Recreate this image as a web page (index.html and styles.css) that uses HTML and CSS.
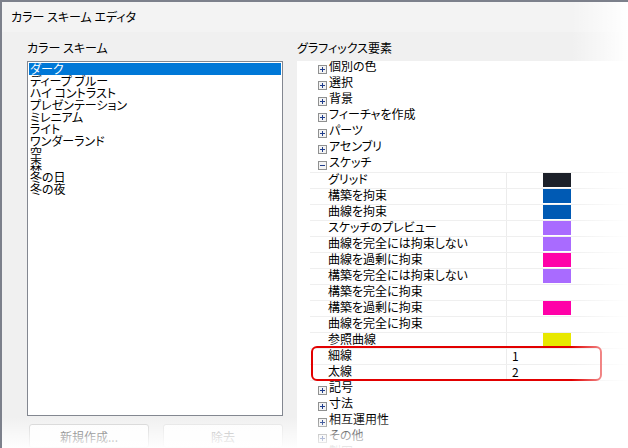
FILE: index.html
```html
<!DOCTYPE html>
<html lang="ja">
<head>
    <meta charset="UTF-8">
    <title>カラー スキーム エディタ</title>
    <link rel="stylesheet" href="styles.css">
</head>
<body>

<div class="ventana">
    <!-- Barra de título -->
    <div class="titulo">カラー スキーム エディタ</div>

    <div class="contenido">
        <!-- Lista de esquemas -->
        <div class="panel panel-izq">
            <div class="etiqueta">カラー スキーム</div>
            <div class="lista">
                <div class="item activo">ダーク</div>
                <div class="item">ディープ ブルー</div>
                <div class="item">ハイ コントラスト</div>
                <div class="item">プレゼンテーション</div>
                <div class="item">ミレニアム</div>
                <div class="item">ライト</div>
                <div class="item">ワンダーランド</div>
                <div class="item">空</div>
                <div class="item">森</div>
                <div class="item">冬の日</div>
                <div class="item">冬の夜</div>
            </div>
            <div class="botones">
                <button class="boton">新規作成...</button>
                <button class="boton boton-off">除去</button>
            </div>
        </div>

        <!-- Árbol de elementos gráficos -->
        <div class="panel panel-der">
            <div class="etiqueta">グラフィックス要素</div>
            <div class="arbol">
                <div class="nodo"><svg class="caja" width="9" height="9"><rect x="0.5" y="0.5" width="8" height="8" fill="#f3f3f3" stroke="#8f9090"/><path d="M2 4.5h5M4.5 2v5" stroke="#1f3d8c"/></svg>個別の色</div>
                <div class="nodo"><svg class="caja" width="9" height="9"><rect x="0.5" y="0.5" width="8" height="8" fill="#f3f3f3" stroke="#8f9090"/><path d="M2 4.5h5M4.5 2v5" stroke="#1f3d8c"/></svg>選択</div>
                <div class="nodo"><svg class="caja" width="9" height="9"><rect x="0.5" y="0.5" width="8" height="8" fill="#f3f3f3" stroke="#8f9090"/><path d="M2 4.5h5M4.5 2v5" stroke="#1f3d8c"/></svg>背景</div>
                <div class="nodo"><svg class="caja" width="9" height="9"><rect x="0.5" y="0.5" width="8" height="8" fill="#f3f3f3" stroke="#8f9090"/><path d="M2 4.5h5M4.5 2v5" stroke="#1f3d8c"/></svg>フィーチャを作成</div>
                <div class="nodo"><svg class="caja" width="9" height="9"><rect x="0.5" y="0.5" width="8" height="8" fill="#f3f3f3" stroke="#8f9090"/><path d="M2 4.5h5M4.5 2v5" stroke="#1f3d8c"/></svg>パーツ</div>
                <div class="nodo"><svg class="caja" width="9" height="9"><rect x="0.5" y="0.5" width="8" height="8" fill="#f3f3f3" stroke="#8f9090"/><path d="M2 4.5h5M4.5 2v5" stroke="#1f3d8c"/></svg>アセンブリ</div>
                <div class="nodo"><svg class="caja" width="9" height="9"><rect x="0.5" y="0.5" width="8" height="8" fill="#f3f3f3" stroke="#8f9090"/><path d="M2 4.5h5" stroke="#1f3d8c"/></svg>スケッチ</div>

                <!-- Propiedades de la sección Sketch -->
                <div class="props">
                    <div class="prop"><div class="nombre">グリッド</div><div class="valor"><span class="color" style="background:#1c2029"></span></div></div>
                    <div class="prop"><div class="nombre">構築を拘束</div><div class="valor"><span class="color" style="background:#005ab4"></span></div></div>
                    <div class="prop"><div class="nombre">曲線を拘束</div><div class="valor"><span class="color" style="background:#005ab4"></span></div></div>
                    <div class="prop"><div class="nombre">スケッチのプレビュー</div><div class="valor"><span class="color" style="background:#a96bff"></span></div></div>
                    <div class="prop"><div class="nombre">曲線を完全には拘束しない</div><div class="valor"><span class="color" style="background:#a96bff"></span></div></div>
                    <div class="prop"><div class="nombre">曲線を過剰に拘束</div><div class="valor"><span class="color" style="background:#ff00a8"></span></div></div>
                    <div class="prop"><div class="nombre">構築を完全には拘束しない</div><div class="valor"><span class="color" style="background:#a96bff"></span></div></div>
                    <div class="prop"><div class="nombre">構築を完全に拘束</div><div class="valor"></div></div>
                    <div class="prop"><div class="nombre">構築を過剰に拘束</div><div class="valor"><span class="color" style="background:#ff00a8"></span></div></div>
                    <div class="prop"><div class="nombre">曲線を完全に拘束</div><div class="valor"></div></div>
                    <div class="prop"><div class="nombre">参照曲線</div><div class="valor"><span class="color" style="background:#e8e800"></span></div></div>
                    <div class="resaltado">
                        <div class="prop"><div class="nombre">細線</div><div class="valor numero">1</div></div>
                        <div class="prop"><div class="nombre">太線</div><div class="valor numero">2</div></div>
                    </div>
                </div>

                <div class="nodo"><svg class="caja" width="9" height="9"><rect x="0.5" y="0.5" width="8" height="8" fill="#f3f3f3" stroke="#8f9090"/><path d="M2 4.5h5M4.5 2v5" stroke="#1f3d8c"/></svg>記号</div>
                <div class="nodo"><svg class="caja" width="9" height="9"><rect x="0.5" y="0.5" width="8" height="8" fill="#f3f3f3" stroke="#8f9090"/><path d="M2 4.5h5M4.5 2v5" stroke="#1f3d8c"/></svg>寸法</div>
                <div class="nodo"><svg class="caja" width="9" height="9"><rect x="0.5" y="0.5" width="8" height="8" fill="#f3f3f3" stroke="#8f9090"/><path d="M2 4.5h5M4.5 2v5" stroke="#1f3d8c"/></svg>相互運用性</div>
                <div class="nodo"><svg class="caja" width="9" height="9"><rect x="0.5" y="0.5" width="8" height="8" fill="#f3f3f3" stroke="#8f9090"/><path d="M2 4.5h5M4.5 2v5" stroke="#1f3d8c"/></svg>その他</div>
                <div class="nodo"><svg class="caja" width="9" height="9"><rect x="0.5" y="0.5" width="8" height="8" fill="#f3f3f3" stroke="#8f9090"/><path d="M2 4.5h5M4.5 2v5" stroke="#1f3d8c"/></svg>製図</div>
            </div>
        </div>
    </div>
</div>

</body>
</html>
```

FILE: styles.css
```css
body {
    margin: 0;
    padding: 0;
    background: #ffffff;
    font-family: "Noto Sans CJK JP", "Noto Sans", sans-serif;
    font-size: 12px;
    font-feature-settings: "palt";
    color: #000000;
    overflow: hidden;
}

/* Ventana principal */
.ventana {
    position: relative;
    width: 628px;
    height: 448px;
    box-sizing: border-box;
    border-top: 2px solid #7c808b;
    border-left: 2px solid #7c808b;
    background: #f0f0f0;
    display: flex;
    flex-direction: column;
    overflow: hidden;
}

/* Degradado blanco a la derecha y abajo */
.ventana::after {
    content: "";
    position: absolute;
    inset: -2px 0 0 -2px;
    pointer-events: none;
    background:
        linear-gradient(to right, rgba(255,255,255,0) 91%, rgba(255,255,255,1) 100%),
        linear-gradient(to bottom, rgba(255,255,255,0) 93%, rgba(255,255,255,0.95) 100%);
}

.titulo {
    height: 30px;
    line-height: 30px;
    padding-left: 9px;
    background: #f3f3f3;
}

.contenido {
    flex: 1;
    display: flex;
    padding: 10px 0 0 25px;
    min-height: 0;
}

.panel {
    display: flex;
    flex-direction: column;
}

.panel-izq {
    width: 256px;
}

.panel-der {
    flex: 1;
    margin-left: 14px;
    min-width: 0;
}

.etiqueta {
    line-height: 12px;
    height: 12px;
    margin-bottom: 7px;
}

/* Lista de esquemas */
.lista {
    height: 358px;
    box-sizing: border-box;
    border: 1px solid #838790;
    background: #ffffff;
    padding: 1px;
}

.item {
    line-height: 12px;
    height: 12px;
    padding-left: 1px;
    white-space: nowrap;
}

.item.activo {
    background: #0078d7;
    color: #ffffff;
}

/* Botones */
.botones {
    display: flex;
    gap: 14px;
    margin: 8px 0 0 2px;
}

.boton {
    width: 120px;
    height: 24px;
    border: 1px solid #d0d0d0;
    border-radius: 3px;
    background: #fdfdfd;
    font-family: inherit;
    font-size: 12px;
    color: #333333;
    padding: 0;
}

.boton-off {
    color: #a8a8a8;
    border-color: #e2e2e2;
}

/* Árbol */
.arbol {
    flex: 1;
    background: #ffffff;
    overflow: hidden;
}

.arbol > .nodo:first-child {
    margin-top: -1px;
}

.nodo {
    display: flex;
    align-items: flex-start;
    height: 16px;
    line-height: 12px;
    padding-left: 21px;
    white-space: nowrap;
}

.caja {
    shape-rendering: crispEdges;
    margin: 5px 2px 0 0;
    flex: none;
}

/* Cuadrícula de propiedades */
.props {
    margin-left: 13px;
    border-bottom: 1px solid #efefef;
}

.prop {
    display: flex;
    height: 16px;
    box-sizing: border-box;
    border-top: 1px solid #efefef;
}

.nombre {
    width: 197px;
    box-sizing: border-box;
    padding-left: 18px;
    border-right: 1px solid #ececec;
    line-height: 12px;
    white-space: nowrap;
}

.valor {
    flex: 1;
    padding-left: 36px;
}

.valor.numero {
    padding-left: 5px;
    line-height: 14px;
}

.color {
    display: block;
    width: 28px;
    height: 14px;
}

/* Recuadro rojo de los grosores de línea */
.resaltado {
    position: relative;
}

.resaltado::after {
    content: "";
    position: absolute;
    top: -2px;
    left: 1px;
    right: 26px;
    bottom: -1px;
    border: 2px solid #e20000;
    border-radius: 6px;
    pointer-events: none;
}
```
